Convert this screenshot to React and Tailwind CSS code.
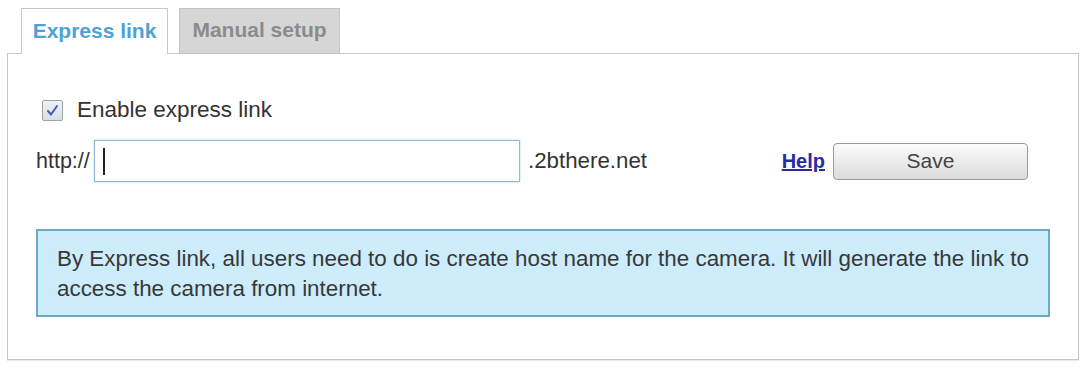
import React from "react";

function CheckBox() {
  return (
    <div className="w-[21px] h-[21px] border border-[#9da3aa] rounded-[2px] bg-gradient-to-b from-[#eef2f6] to-[#d9dfe6] flex items-center justify-center">
      <svg width="13" height="13" viewBox="0 0 13 13">
        <path d="M2 7 L5 10.5 L11 2" fill="none" stroke="#3f63a8" strokeWidth="2" strokeLinecap="round" strokeLinejoin="round" />
      </svg>
    </div>
  );
}

export default function App() {
  return (
    <div className="w-[1084px] h-[367px] bg-white pt-2 pl-[7px] pr-[5px] font-['Liberation_Sans',Arial,sans-serif]">
      {/* tabs */}
      <div className="flex items-start gap-[11px] pl-[14px] relative z-10 -mb-px">
        <div className="w-[147px] h-[46px] bg-white border border-b-0 border-[#c8c8c8] flex items-center justify-center pb-[2px]">
          <span className="text-[21px] font-bold text-[#4da2d6]">Express link</span>
        </div>
        <div className="w-[161px] h-[46px] bg-[#d6d6d6] border border-[#c4c4c4] flex items-center justify-center pb-[2px]">
          <span className="text-[21px] font-bold text-[#8b8b8b]">Manual setup</span>
        </div>
      </div>

      {/* panel */}
      <div className="h-[307px] border border-[#c8c8c8] shadow-[0_1px_1px_rgba(0,0,0,0.08)] px-[28px] pt-[44px] text-[#333]">
        <div className="flex items-center gap-[14px] ml-[6px] h-[24px]">
          <CheckBox />
          <span className="text-[22.5px] text-[#333]">Enable express link</span>
        </div>

        <div className="flex items-center mt-[18px] h-[42px]">
          <span className="text-[21.5px] text-[#333] w-[58px]">http://</span>
          <div className="w-[426px] h-[42px] border border-[#8fbcd9] shadow-[0_0_2px_rgba(120,180,220,0.6)] bg-white flex items-center pl-[8px]">
            <div className="w-[2px] h-[27px] bg-[#222]" />
          </div>
          <span className="ml-[8px] text-[22.3px] text-[#333]">.2bthere.net</span>
          <a href="#" className="ml-auto text-[20px] font-bold text-[#2a2aa6] underline">Help</a>
          <button className="ml-[8px] mr-[22px] w-[195px] h-[37px] rounded-[4px] border border-[#9a9a9a] bg-gradient-to-b from-[#fbfbfb] to-[#dcdcdc] text-[21px] text-[#444]">
            Save
          </button>
        </div>

        <div className="mt-[47px] h-[88px] border-2 border-[#6aaac8] bg-[#cdecfc] pl-[19px] pt-[13px] text-[22.4px] leading-[30px] text-[#383838] whitespace-nowrap">
          By Express link, all users need to do is create host name for the camera. It will generate the link to
          <br />
          access the camera from internet.
        </div>
      </div>
    </div>
  );
}
